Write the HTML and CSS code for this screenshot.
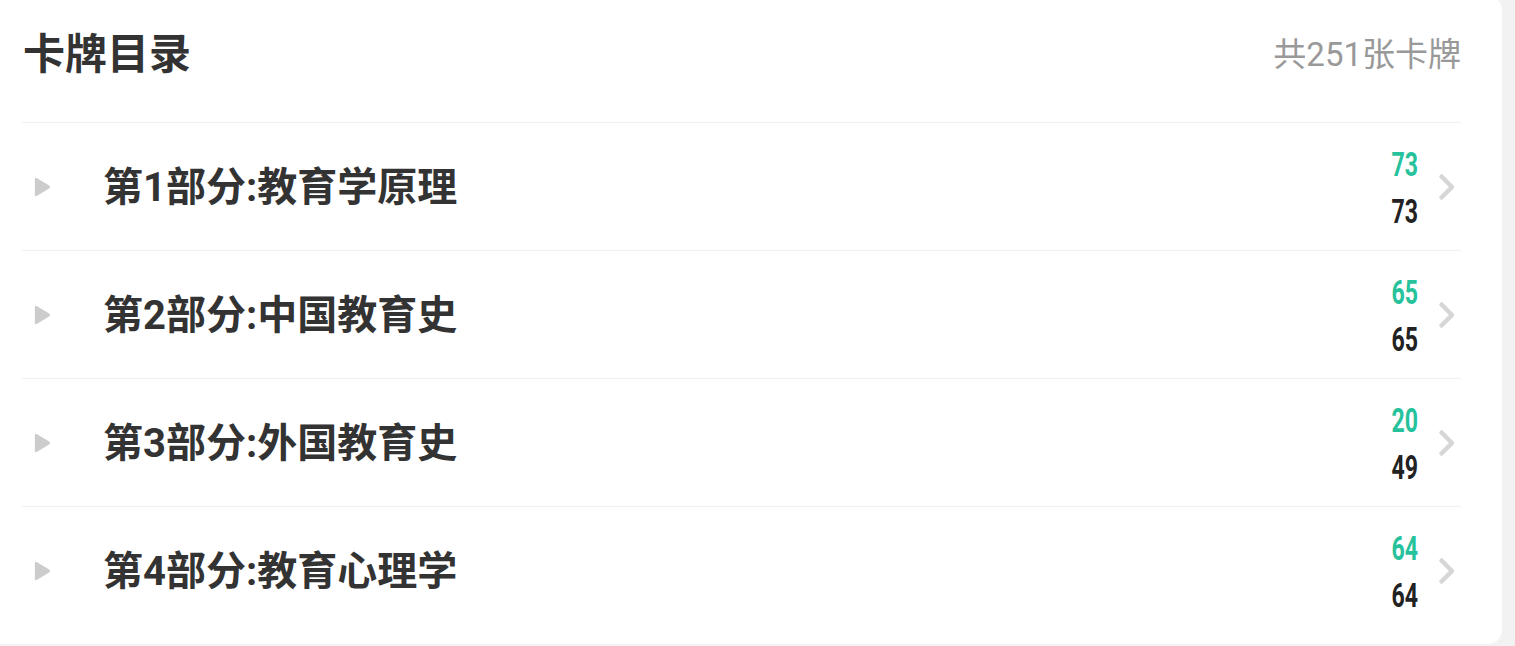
FILE: index.html
```html
<!DOCTYPE html>
<html lang="zh">
<head>
<meta charset="utf-8">
<link rel="stylesheet" href="styles.css">
</head>
<body>
<div class="card">
  <div class="header">
    <h1 class="title">卡牌目录</h1>
    <span class="total">共251张卡牌</span>
  </div>
  <ul class="list">
    <li class="row">
      <svg class="tri" viewBox="0 0 16 20" width="18" height="22"><path d="M1.5 3 Q1.5 0.8 3.5 2 L14.5 8.7 Q16 10 14.5 11.3 L3.5 18 Q1.5 19.2 1.5 17 Z" fill="#cccccc"/></svg>
      <span class="name">第1部分:教育学原理</span>
      <span class="nums"><span class="n-learned">73</span><span class="n-total">73</span></span>
      <svg class="chev" viewBox="0 0 18 28" width="18" height="28"><path d="M3.5 3.5 L14 14 L3.5 24.5" fill="none" stroke="#d6d6d6" stroke-width="4.5" stroke-linecap="round" stroke-linejoin="round"/></svg>
    </li>
    <li class="row">
      <svg class="tri" viewBox="0 0 16 20" width="18" height="22"><path d="M1.5 3 Q1.5 0.8 3.5 2 L14.5 8.7 Q16 10 14.5 11.3 L3.5 18 Q1.5 19.2 1.5 17 Z" fill="#cccccc"/></svg>
      <span class="name">第2部分:中国教育史</span>
      <span class="nums"><span class="n-learned">65</span><span class="n-total">65</span></span>
      <svg class="chev" viewBox="0 0 18 28" width="18" height="28"><path d="M3.5 3.5 L14 14 L3.5 24.5" fill="none" stroke="#d6d6d6" stroke-width="4.5" stroke-linecap="round" stroke-linejoin="round"/></svg>
    </li>
    <li class="row">
      <svg class="tri" viewBox="0 0 16 20" width="18" height="22"><path d="M1.5 3 Q1.5 0.8 3.5 2 L14.5 8.7 Q16 10 14.5 11.3 L3.5 18 Q1.5 19.2 1.5 17 Z" fill="#cccccc"/></svg>
      <span class="name">第3部分:外国教育史</span>
      <span class="nums"><span class="n-learned">20</span><span class="n-total">49</span></span>
      <svg class="chev" viewBox="0 0 18 28" width="18" height="28"><path d="M3.5 3.5 L14 14 L3.5 24.5" fill="none" stroke="#d6d6d6" stroke-width="4.5" stroke-linecap="round" stroke-linejoin="round"/></svg>
    </li>
    <li class="row">
      <svg class="tri" viewBox="0 0 16 20" width="18" height="22"><path d="M1.5 3 Q1.5 0.8 3.5 2 L14.5 8.7 Q16 10 14.5 11.3 L3.5 18 Q1.5 19.2 1.5 17 Z" fill="#cccccc"/></svg>
      <span class="name">第4部分:教育心理学</span>
      <span class="nums"><span class="n-learned">64</span><span class="n-total">64</span></span>
      <svg class="chev" viewBox="0 0 18 28" width="18" height="28"><path d="M3.5 3.5 L14 14 L3.5 24.5" fill="none" stroke="#d6d6d6" stroke-width="4.5" stroke-linecap="round" stroke-linejoin="round"/></svg>
    </li>
  </ul>
</div>
</body>
</html>
```

FILE: styles.css
```css
* { box-sizing: border-box; }
html, body {
  margin: 0;
  padding: 0;
  background: #f2f2f2;
  height: 646px;
  overflow: hidden;
}
body {
  font-family: Roboto, "Noto Sans CJK SC", "Noto Sans", sans-serif;
}
.card {
  width: 1502px;
  margin-top: -4px;
  height: 648px;
  background: #ffffff;
  border-radius: 0 14px 14px 0;
  padding: 4px 41px 0 22px;
}
.header {
  height: 123px;
  display: flex;
  align-items: center;
  justify-content: space-between;
  border-bottom: 1px solid #f0f0f0;
  padding-left: 1px;
}
.title {
  margin: 0;
  font-size: 42px;
  font-weight: 700;
  color: #333333;
  line-height: 1;
  padding-bottom: 12px;
}
.total {
  font-size: 33px;
  color: #999999;
  line-height: 1;
  padding-bottom: 14px;
}
.list {
  list-style: none;
  margin: 0;
  padding: 0;
}
.row {
  height: 128px;
  display: flex;
  align-items: center;
  border-bottom: 1px solid #f0f0f0;
}
.row:last-child { border-bottom: none; }
.tri {
  margin-left: 11px;
  flex: none;
}
.name {
  margin-left: 52px;
  font-size: 40px;
  font-weight: 700;
  color: #333333;
  flex: 1;
  line-height: 1;
  padding-top: 2px;
}
.nums {
  display: flex;
  flex-direction: column;
  align-items: flex-end;
  font-family: Roboto, sans-serif;
  font-weight: 700;
  font-size: 34px;
  line-height: 47px;
  padding-top: 2px;
}
.n-learned,
.n-total {
  display: inline-block;
  transform: scaleX(0.68);
  transform-origin: right center;
}
.n-learned { color: #26c29c; }
.n-total { color: #222222; }
.chev {
  margin-left: 20px;
  margin-right: 5px;
  flex: none;
}
```
